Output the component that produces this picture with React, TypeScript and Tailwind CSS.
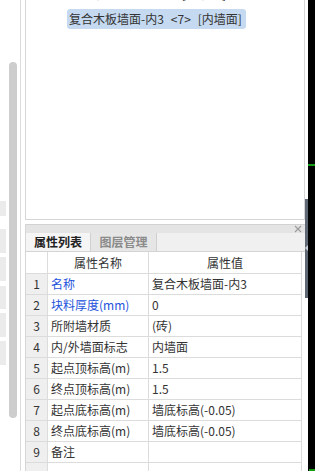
import React from "react";

const rows: { n: number; name: string; value: string; blue?: boolean }[] = [
  { n: 1, name: "名称", value: "复合木板墙面-内3", blue: true },
  { n: 2, name: "块料厚度(mm)", value: "0", blue: true },
  { n: 3, name: "所附墙材质", value: "(砖)" },
  { n: 4, name: "内/外墙面标志", value: "内墙面" },
  { n: 5, name: "起点顶标高(m)", value: "1.5" },
  { n: 6, name: "终点顶标高(m)", value: "1.5" },
  { n: 7, name: "起点底标高(m)", value: "墙底标高(-0.05)" },
  { n: 8, name: "终点底标高(m)", value: "墙底标高(-0.05)" },
  { n: 9, name: "备注", value: "" },
  { n: 10, name: "", value: "" },
];

export default function App() {
  return (
    <div
      className="w-[315px] h-[471px] flex bg-white overflow-hidden text-[12px] text-[#333]"
      style={{ fontFamily: '"Noto Sans CJK SC", "Noto Sans", sans-serif' }}
    >
      {/* left strip blocks */}
      <div className="w-[8px] flex flex-col">
        <div className="w-[6px] h-[15px] bg-[#ebebeb] mt-[201px]" />
        <div className="w-[6px] h-[24px] bg-[#ebebeb] mt-[13px]" />
        <div className="w-[6px] h-[24px] bg-[#ebebeb] mt-[4px]" />
        <div className="w-[6px] h-[23px] bg-[#ebebeb] mt-[5px]" />
        <div className="w-[6px] h-[24px] bg-[#ebebeb] mt-[4px]" />
        <div className="w-[6px] h-[24px] bg-[#ebebeb] mt-[4px]" />
      </div>
      {/* scrollbar */}
      <div className="w-[9px] flex flex-col">
        <div className="mt-[62px] h-[356px] w-[8px] ml-[1px] rounded-[4px] bg-[#cdcdcd]" />
      </div>
      <div className="w-[3px]" />
      <div className="w-[1px] bg-[#dcdcdc]" />
      <div className="w-[4px]" />

      {/* main column */}
      <div className="w-[280px] flex flex-col">
        {/* top panel */}
        <div className="h-[220px] border border-t-0 border-[#d6d6d6] overflow-hidden">
          <div className="mt-[-16px] flex flex-col gap-[5px]">
            <div className="h-[20px] ml-[41px] px-[2px] flex items-center whitespace-nowrap leading-none">
              <span>复合墙面-1</span>
              <span className="ml-[54px]">[内墙面]</span>
            </div>
            <div className="h-[20px] ml-[41px] w-[179px] px-[2px] flex items-center whitespace-nowrap leading-none bg-[#c5daf1] rounded-[3px]">
              <span>复合木板墙面-内3</span>
              <span className="ml-[7px]">&lt;7&gt;</span>
              <span className="ml-[7px]">[内墙面]</span>
            </div>
          </div>
        </div>
        <div className="h-[4px]" />
        {/* bottom panel */}
        <div className="flex-1 flex flex-col border-l border-[#d6d6d6] overflow-hidden">
          <div className="h-[12px] bg-[#e4e4e4] border-t border-[#d2d2d2] flex items-center justify-end pr-[3px]">
            <svg width="8" height="8" viewBox="0 0 8 8">
              <path d="M1 1L7 7M7 1L1 7" stroke="#9a9a9a" strokeWidth="1.1" />
            </svg>
          </div>
          <div className="h-[21px] bg-[#f0f0f0] border-b border-[#d4d4d4] flex">
            <div className="w-[65px] bg-[#f5f5f5] border-r border-[#d0d0d0] flex items-center justify-center font-bold text-[#222]">
              属性列表
            </div>
            <div className="w-[66px] bg-[#e6e6e6] border-r border-[#d0d0d0] flex items-center justify-center font-bold text-[#8a8a8a]">
              图层管理
            </div>
            <div className="flex-1" />
          </div>
          <div className="grid grid-cols-[22px_101px_153px]">
            <div className="h-[22px] border-r border-b border-[#dcdcdc]" />
            <div className="h-[22px] border-r border-b border-[#dcdcdc] flex items-center justify-center">
              属性名称
            </div>
            <div className="h-[22px] border-r border-b border-[#dcdcdc] flex items-center justify-center">
              属性值
            </div>
            {rows.map((r) => (
              <React.Fragment key={r.n}>
                <div className="h-[21px] bg-[#efefef] border-r border-b border-[#dcdcdc] flex items-center justify-center">
                  {r.n <= 9 ? r.n : ""}
                </div>
                <div
                  className={
                    r.blue
                      ? "h-[21px] border-r border-b border-[#dcdcdc] flex items-center pl-[3px] whitespace-nowrap text-[#2352dc]"
                      : "h-[21px] border-r border-b border-[#dcdcdc] flex items-center pl-[3px] whitespace-nowrap"
                  }
                >
                  {r.name}
                </div>
                <div className="h-[21px] border-r border-b border-[#dcdcdc] flex items-center pl-[3px] whitespace-nowrap">
                  {r.value}
                </div>
              </React.Fragment>
            ))}
          </div>
        </div>
      </div>

      {/* right thin strip */}
      <div className="w-[3px] flex flex-col">
        <div className="mt-[199px] h-[99px] bg-[#5f6875] flex flex-col items-center">
          <svg className="mt-[46px]" width="3" height="6" viewBox="0 0 3 6">
            <path d="M3 0L0 3L3 6Z" fill="#c8ccd2" />
          </svg>
        </div>
      </div>
      {/* black edge */}
      <div className="w-[7px] bg-black flex flex-col">
        <div className="mt-[164px] h-[2px] bg-[#159a15]" />
        <div className="mt-[303px] h-[2px] ml-[1px] bg-[#159a15]" />
      </div>
    </div>
  );
}
